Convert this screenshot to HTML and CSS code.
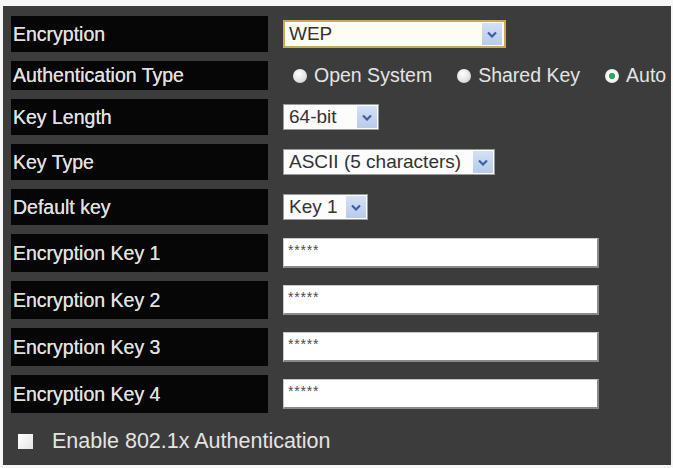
FILE: index.html
```html
<!DOCTYPE html>
<html>
<head>
<meta charset="utf-8">
<link rel="stylesheet" href="styles.css">
</head>
<body>
<div class="panel">
  <div class="row">
    <div class="label">Encryption</div>
    <div class="select sel-wep"><span class="val">WEP</span><span class="arrow"><svg width="10" height="7" viewBox="0 0 10 7"><path d="M1 1.5 L5 5.5 L9 1.5" fill="none" stroke="#3d5fa8" stroke-width="2.2"/></svg></span></div>
  </div>
  <div class="row">
    <div class="label short">Authentication Type</div>
    <div class="radios">
      <span class="radio"><span class="dot"></span>Open System</span>
      <span class="radio"><span class="dot"></span>Shared Key</span>
      <span class="radio"><span class="dot on"></span>Auto</span>
    </div>
  </div>
  <div class="row">
    <div class="label">Key Length</div>
    <div class="select sel-len"><span class="val">64-bit</span><span class="arrow"><svg width="10" height="7" viewBox="0 0 10 7"><path d="M1 1.5 L5 5.5 L9 1.5" fill="none" stroke="#3d5fa8" stroke-width="2.2"/></svg></span></div>
  </div>
  <div class="row">
    <div class="label">Key Type</div>
    <div class="select sel-type"><span class="val">ASCII (5 characters)</span><span class="arrow"><svg width="10" height="7" viewBox="0 0 10 7"><path d="M1 1.5 L5 5.5 L9 1.5" fill="none" stroke="#3d5fa8" stroke-width="2.2"/></svg></span></div>
  </div>
  <div class="row">
    <div class="label">Default key</div>
    <div class="select sel-key"><span class="val">Key 1</span><span class="arrow"><svg width="10" height="7" viewBox="0 0 10 7"><path d="M1 1.5 L5 5.5 L9 1.5" fill="none" stroke="#3d5fa8" stroke-width="2.2"/></svg></span></div>
  </div>
  <div class="row">
    <div class="label key">Encryption Key 1</div>
    <div class="input"><span class="mask">*****</span></div>
  </div>
  <div class="row">
    <div class="label key">Encryption Key 2</div>
    <div class="input"><span class="mask">*****</span></div>
  </div>
  <div class="row">
    <div class="label key">Encryption Key 3</div>
    <div class="input"><span class="mask">*****</span></div>
  </div>
  <div class="row">
    <div class="label key">Encryption Key 4</div>
    <div class="input"><span class="mask">*****</span></div>
  </div>
  <div class="check-row">
    <span class="checkbox"></span>
    <span class="check-text">Enable 802.1x Authentication</span>
  </div>
</div>
</body>
</html>
```

FILE: styles.css
```css
html, body {
  margin: 0;
  padding: 0;
  background: #f6f6f6;
}
body {
  font-family: "Liberation Sans", Arial, sans-serif;
  width: 673px;
  height: 468px;
  overflow: hidden;
}
.panel {
  margin: 6px 2px 0 3px;
  background: #3c3c3c;
  padding: 10px 0 0 8px;
  display: flex;
  flex-direction: column;
  gap: 9px;
  height: 459px;
  box-sizing: border-box;
}
.row {
  display: flex;
  align-items: center;
  gap: 15px;
}
.label {
  width: 255px;
  height: 36px;
  padding-left: 2px;
  background: #060606;
  color: #e0e0e0;
  font-size: 19.5px;
  display: flex;
  align-items: center;
  flex: none;
  text-shadow: 0 0 0.6px #e0e0e0;
}
.label.short { height: 29px; }
.label.key { height: 38px; }

.select {
  display: flex;
  align-items: center;
  justify-content: space-between;
  background: #fcfcfc;
  box-sizing: border-box;
  height: 26px;
  border: 1px solid #9a9a9a;
  color: #333;
  font-size: 19px;
  padding: 0 1px 0 5px;
}
.sel-wep {
  width: 223px;
  height: 28px;
  border: 2px solid #c9a85e;
  background: #fffdf2;
  padding-left: 4px;
  padding-right: 2px;
}
.sel-len { width: 96px; }
.sel-type { width: 212px; }
.sel-key { width: 85px; }
.arrow {
  width: 20px;
  height: 22px;
  background: linear-gradient(#d4e0f4, #b8cbea);
  display: flex;
  align-items: center;
  justify-content: center;
}

.radios {
  display: flex;
  align-items: center;
  color: #e4e4e4;
  font-size: 19.5px;
  margin-left: 10px;
}
.radio {
  display: flex;
  align-items: center;
  gap: 7px;
  margin-right: 25px;
}
.radio:last-child { margin-right: 0; }
.dot {
  width: 14px;
  height: 14px;
  border-radius: 50%;
  background: radial-gradient(circle at 40% 35%, #ffffff 0%, #e4e4e4 55%, #bdbdbd 100%);
}
.dot.on {
  background: radial-gradient(circle, #2fa45a 0 28%, #ffffff 36%, #e6e6e6 75%, #bdbdbd 100%);
}

.input {
  width: 316px;
  height: 30px;
  box-sizing: border-box;
  background: #ffffff;
  border-top: 1px solid #c8c8c8;
  border-left: 1px solid #c8c8c8;
  border-bottom: 2px solid #8a8a8a;
  border-right: 2px solid #8a8a8a;
  padding: 4px 0 0 4px;
}
.mask {
  font-size: 14px;
  letter-spacing: 0.8px;
  color: #4a4a4a;
  display: block;
  line-height: 14px;
}

.check-row {
  display: flex;
  align-items: center;
  margin-top: 9px;
  height: 20px;
  padding-left: 7px;
  gap: 19px;
}
.checkbox {
  width: 15px;
  height: 15px;
  background: linear-gradient(135deg, #ffffff, #e4e4e4);
  flex: none;
}
.check-text {
  color: #e4e4e4;
  font-size: 21.5px;
}
```
